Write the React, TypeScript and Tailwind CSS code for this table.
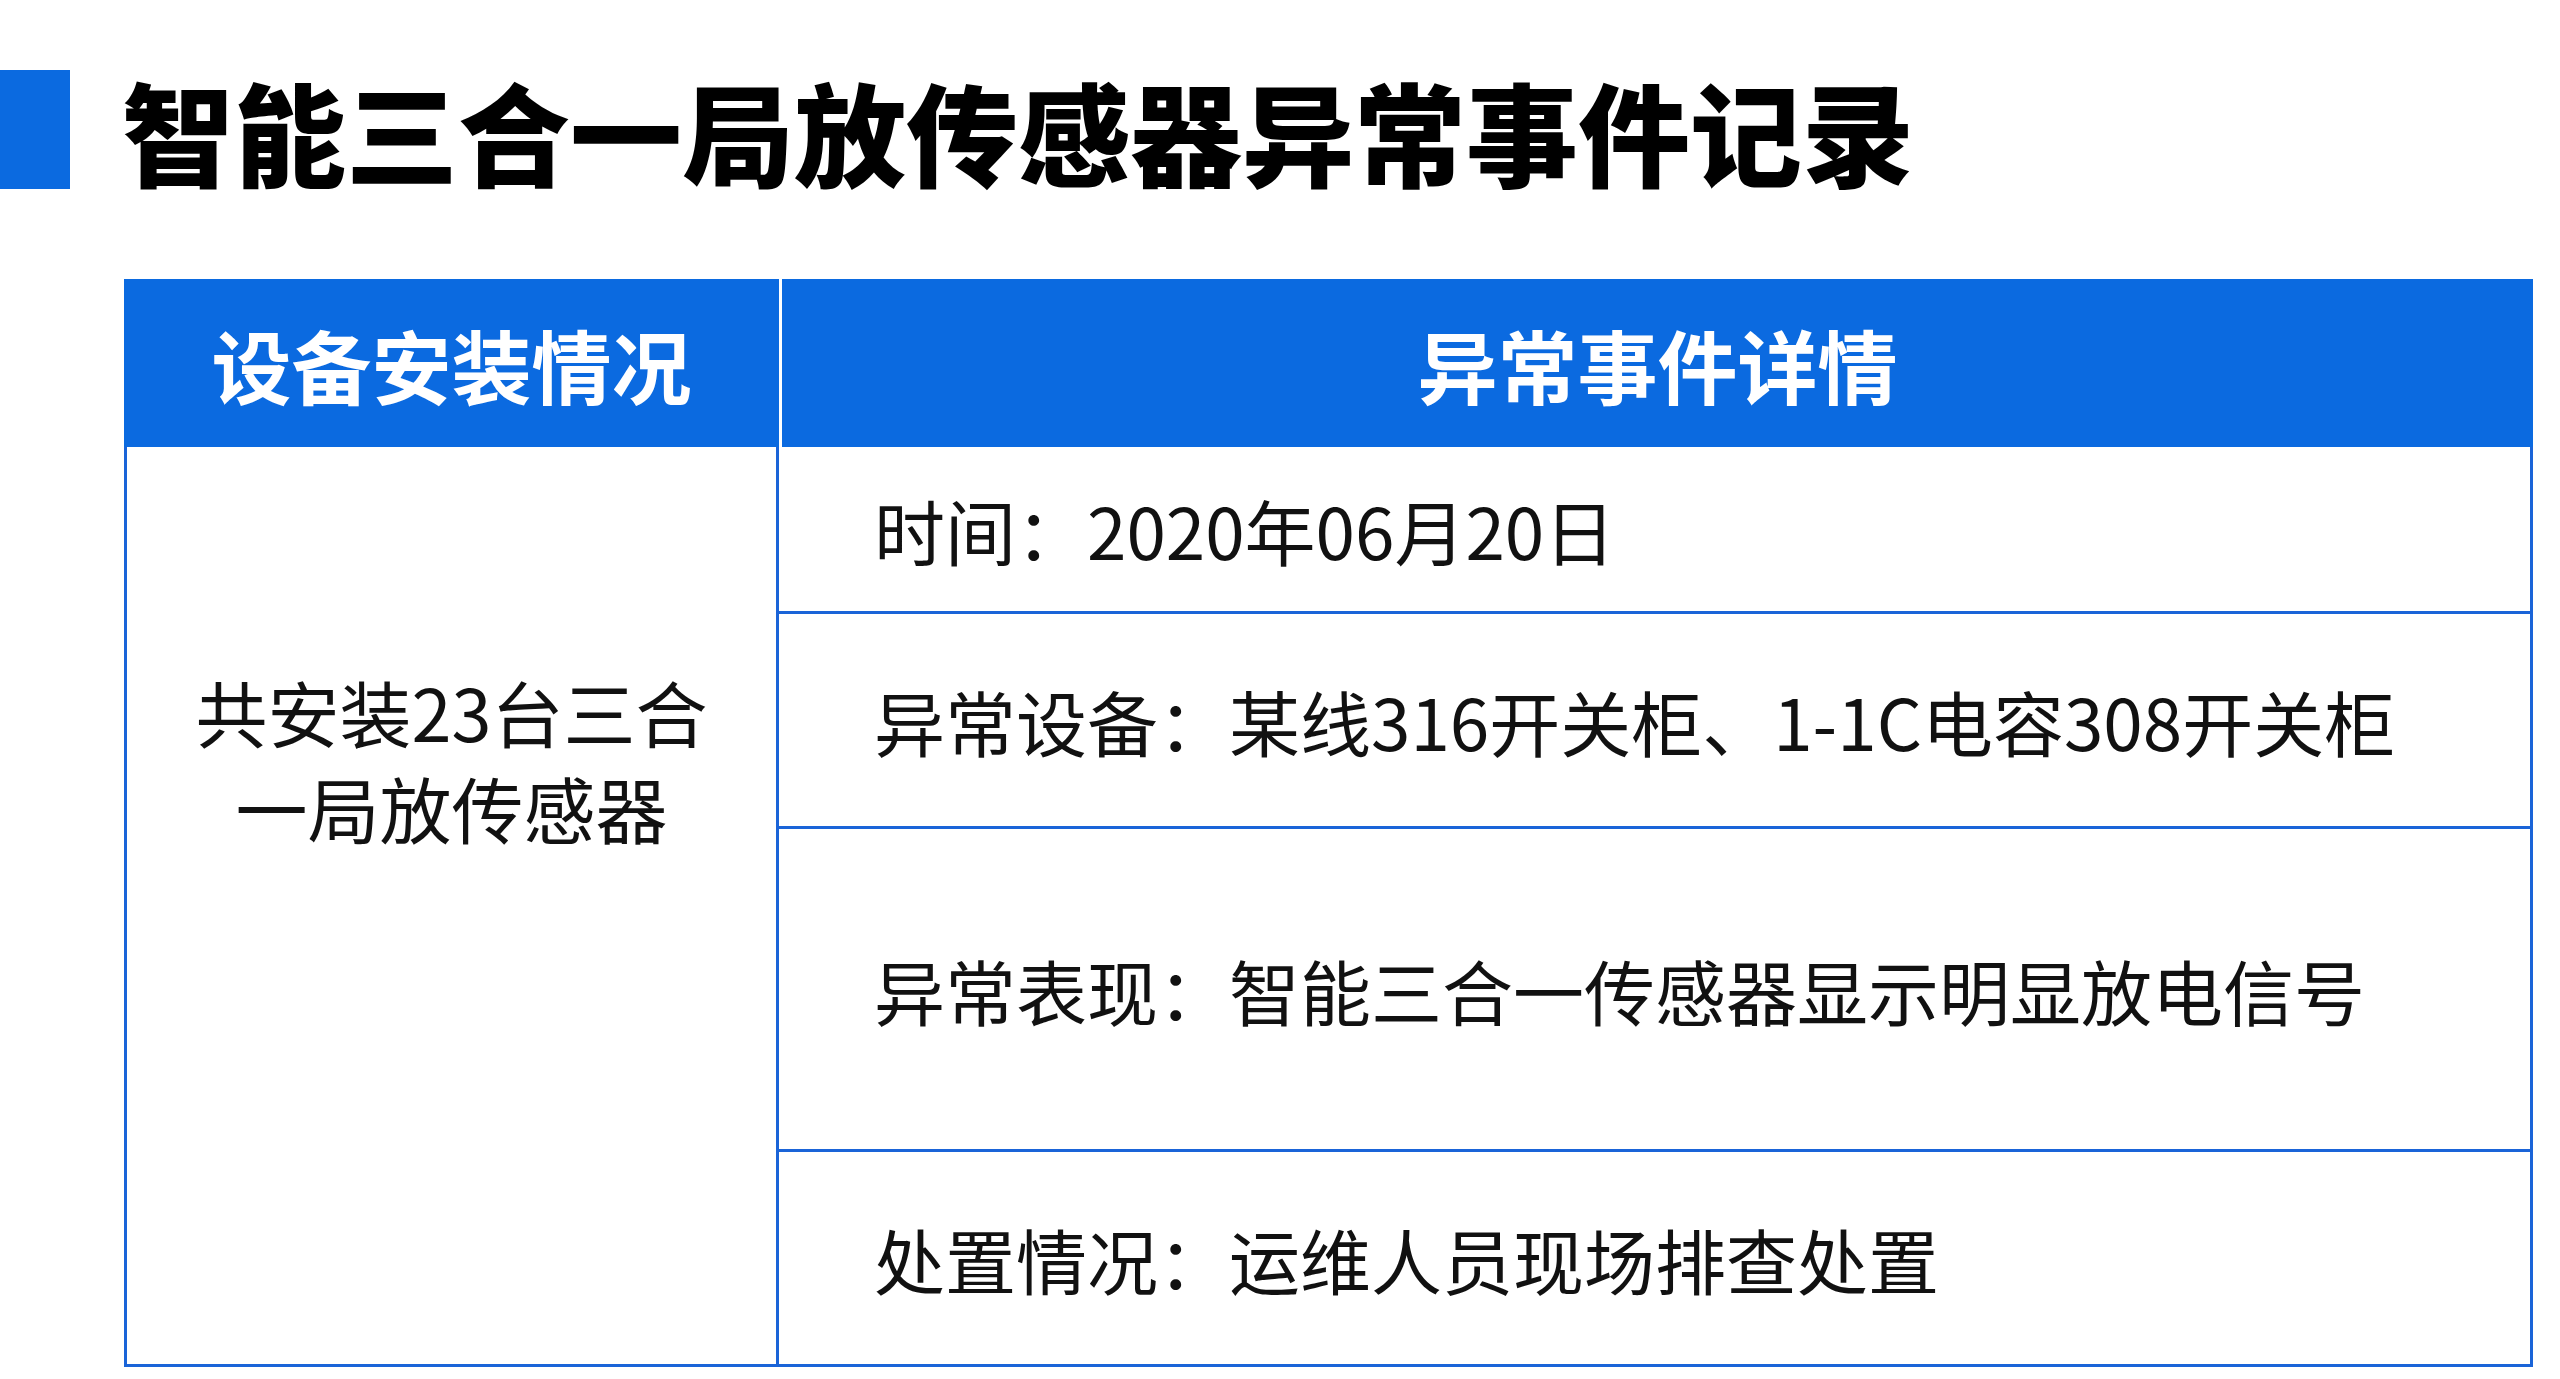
const rows = [
  { h: 'h-[167px]', text: '时间：2020年06月20日' },
  { h: 'h-[215px]', text: '异常设备：某线316开关柜、1-1C电容308开关柜' },
  { h: 'h-[323px]', text: '异常表现：智能三合一传感器显示明显放电信号' },
  { h: 'h-[215px]', text: '处置情况：运维人员现场排查处置' },
];

export default function App() {
  return (
    <div className="min-h-screen w-full bg-white font-['Noto_Sans_CJK_SC',sans-serif] text-[#111]">
      {/* Title */}
      <div className="flex items-center pt-[70px]">
        <div className="h-[119px] w-[70px] bg-[#0b6ae0]" />
        <h1 className="ml-[52px] text-[112px] font-black leading-none text-black">
          智能三合一局放传感器异常事件记录
        </h1>
      </div>

      {/* Table */}
      <div className="ml-[124px] mt-[90px] flex w-[2409px]">
        {/* Left column */}
        <div className="flex w-[655px] flex-col">
          <div className="flex h-[168px] items-center justify-center bg-[#0b6ae0]">
            <span className="text-[80px] font-bold leading-none text-white">设备安装情况</span>
          </div>
          <div className="flex h-[920px] flex-col items-center border-x-[3px] border-b-[3px] border-[#1a64d8] pt-[216px] text-[72px] leading-[96px]">
            <p>共安装23台三合</p>
            <p>一局放传感器</p>
          </div>
        </div>

        {/* Right column */}
        <div className="flex flex-1 flex-col">
          <div className="flex h-[168px] items-center justify-center border-l-[3px] border-white bg-[#0b6ae0]">
            <span className="text-[80px] font-bold leading-none text-white">异常事件详情</span>
          </div>
          {rows.map((r, i) => (
            <div
              key={i}
              className={`flex ${r.h} items-center border-b-[3px] border-r-[3px] border-[#1a64d8] pl-[95px] text-[71px] leading-none`}
            >
              {r.text}
            </div>
          ))}
        </div>
      </div>
    </div>
  );
}
